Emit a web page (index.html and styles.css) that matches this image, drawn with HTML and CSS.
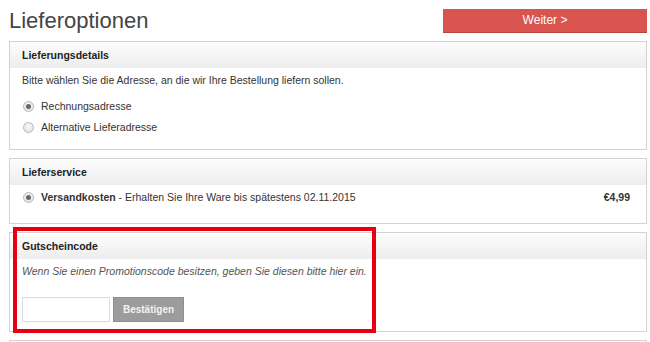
FILE: index.html
```html
<!DOCTYPE html>
<html>
<head>
  <title>Lieferoptionen</title>
  <link rel="stylesheet" href="styles.css">
</head>
<body>
  <div class="page">
    <div class="topbar">
      <h1>Lieferoptionen</h1>
      <button class="nextBtn">Weiter &gt;</button>
    </div>

    <section class="panel">
      <div class="panelHead">Lieferungsdetails</div>
      <div class="panelBody">
        <p class="line">Bitte wählen Sie die Adresse, an die wir Ihre Bestellung liefern sollen.</p>
        <div class="options">
          <label class="radioRow"><span class="radio checked"></span>Rechnungsadresse</label>
          <label class="radioRow"><span class="radio"></span>Alternative Lieferadresse</label>
        </div>
      </div>
    </section>

    <section class="panel">
      <div class="panelHead">Lieferservice</div>
      <div class="panelBody">
        <div class="shipRow">
          <label class="radioRow"><span class="radio checked"></span><b>Versandkosten</b>&nbsp;- Erhalten Sie Ihre Ware bis spätestens 02.11.2015</label>
          <span class="price">€4,99</span>
        </div>
      </div>
    </section>

    <section class="panel voucher">
      <div class="panelHead">Gutscheincode</div>
      <div class="panelBody">
        <p class="line hint">Wenn Sie einen Promotionscode besitzen, geben Sie diesen bitte hier ein.</p>
        <div class="codeForm">
          <input type="text" class="codeInput">
          <button class="confirmBtn">Bestätigen</button>
        </div>
      </div>
      <div class="highlight"></div>
    </section>

    <section class="panel nextPanel"></section>
  </div>
</body>
</html>
```

FILE: styles.css
```css
body { margin: 0; font-family: "Liberation Sans", Arial, sans-serif; color: #333; background: #fff; }
.page { padding: 0 3px 0 9px; }

.topbar { display: flex; justify-content: space-between; align-items: center; height: 41px; }
.topbar h1 { margin: 0; font-size: 22px; font-weight: normal; color: #444; }
.nextBtn {
  width: 204px;
  height: 24px;
  border: none;
  border-bottom: 1px solid #b9423f;
  background-color: #d9534f;
  color: #fff;
  font-family: inherit;
  font-size: 12px;
  padding: 0;
}

.panel { position: relative; border: 1px solid #d2d2d2; margin-bottom: 8px; background: #fff; }
.panelHead {
  height: 26px;
  line-height: 26px;
  padding: 0 12px;
  font-size: 10.5px;
  font-weight: bold;
  color: #222;
  background: linear-gradient(#fdfdfd, #ededed);
}
.panelBody { padding: 4px 12px 9px; font-size: 10.5px; }
.line { margin: 0; line-height: 16px; }
.hint { font-style: italic; color: #555; }

.options { margin-bottom: 5px; }
.radioRow { display: flex; align-items: center; height: 16px; margin-top: 5px; }
.options .radioRow:first-child { margin-top: 10px; }
.radio {
  width: 9px;
  height: 9px;
  border: 1px solid #b8b8b8;
  border-radius: 50%;
  background: radial-gradient(circle at 50% 40%, #fafafa, #dcdcdc);
  margin: 0 7px 0 1px;
  position: relative;
  flex: none;
}
.radio.checked::after {
  content: "";
  position: absolute;
  left: 2px;
  top: 2px;
  width: 5px;
  height: 5px;
  border-radius: 50%;
  background: #666;
}
.radioRow b { color: #333; }

.shipRow { display: flex; justify-content: space-between; align-items: center; margin-bottom: 9px; }
.shipRow .radioRow { margin-top: 0; }
.price { font-weight: bold; margin-right: 4px; }

.codeForm { display: flex; gap: 3px; margin-top: 18px; }
.codeInput { width: 88px; height: 25px; box-sizing: border-box; border: 1px solid #dcdcdc; margin: 0; padding: 0 4px; }
.confirmBtn {
  width: 71px;
  height: 25px;
  border: 1px solid #8f8f8f;
  background: #9c9c9c;
  color: #f2f2f2;
  font-family: inherit;
  font-size: 10px;
  font-weight: bold;
  padding: 0;
}

.highlight {
  position: absolute;
  left: 3px;
  top: -6px;
  width: 363px;
  height: 106px;
  box-sizing: border-box;
  border: 4px solid #e60012;
}

.nextPanel { height: 40px; }
```
